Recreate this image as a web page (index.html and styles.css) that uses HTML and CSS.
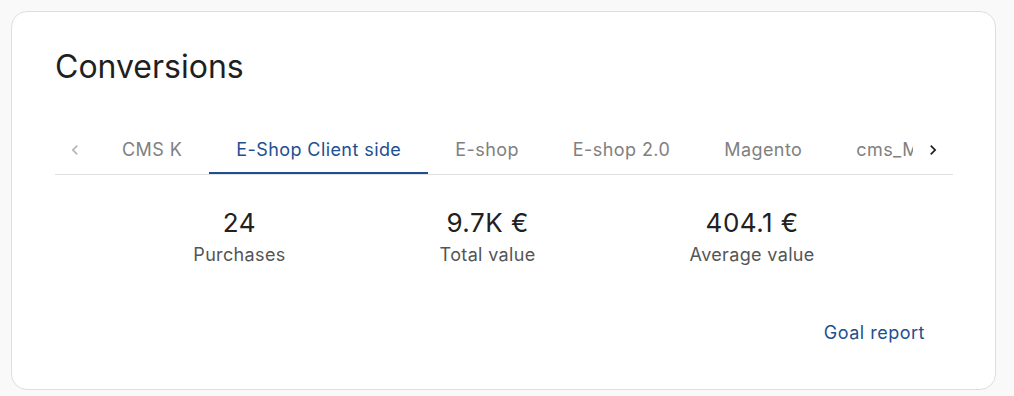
FILE: index.html
```html
<!DOCTYPE html>
<html lang="en">
<head>
    <meta charset="UTF-8">
    <meta name="viewport" content="width=device-width, initial-scale=1.0">
    <title>Conversions</title>
    <link rel="stylesheet" href="styles.css">
</head>
<body>
<div class="card">
    <h1>Conversions</h1>

    <div class="tabs">
        <button class="scroll-btn scroll-left" aria-label="Previous">
            <svg width="20" height="20" viewBox="0 0 24 24"><path d="M15.41 7.41 14 6l-6 6 6 6 1.41-1.41L10.83 12z"/></svg>
        </button>
        <div class="tab-list">
            <div class="tab">CMS K</div>
            <div class="tab active">E-Shop Client side</div>
            <div class="tab">E-shop</div>
            <div class="tab">E-shop 2.0</div>
            <div class="tab">Magento</div>
            <div class="tab">cms_Magento</div>
        </div>
        <button class="scroll-btn scroll-right" aria-label="Next">
            <svg width="20" height="20" viewBox="0 0 24 24"><path d="M10 6 8.59 7.41 13.17 12l-4.58 4.59L10 18l6-6z"/></svg>
        </button>
    </div>

    <div class="stats">
        <div class="stat">
            <div class="stat-value">24</div>
            <div class="stat-label">Purchases</div>
        </div>
        <div class="stat">
            <div class="stat-value">9.7K €</div>
            <div class="stat-label">Total value</div>
        </div>
        <div class="stat">
            <div class="stat-value">404.1 €</div>
            <div class="stat-label">Average value</div>
        </div>
    </div>

    <div class="actions">
        <a class="link-btn" href="#">Goal report</a>
    </div>
</div>
</body>
</html>
```

FILE: styles.css
```css
body {
    margin: 0;
    padding: 11px 18px 7px 11px;
    background-color: #f9f9f9;
    font-family: Inter, "Noto Sans", sans-serif;
}
.card {
    background-color: #ffffff;
    border: 1px solid #dedede;
    border-radius: 16px;
    padding: 35px 42px 0 43px;
    height: 342px;
}
h1 {
    margin: 0;
    font-size: 32px;
    line-height: 40px;
    font-weight: 400;
    color: #1f1f1f;
}
.tabs {
    display: flex;
    align-items: stretch;
    height: 48px;
    margin-top: 39px;
    border-bottom: 1px solid #e0e0e0;
}
.scroll-btn {
    flex: 0 0 40px;
    display: flex;
    align-items: center;
    justify-content: center;
    padding: 0;
    border: none;
    background: none;
    cursor: pointer;
}
.scroll-left svg {
    fill: #b5b5b5;
}
.scroll-right svg {
    fill: #1f1f1f;
}
.tab-list {
    flex: 1;
    display: flex;
    overflow: hidden;
}
.tab {
    flex: none;
    display: flex;
    align-items: center;
    padding: 0 27px;
    font-size: 18px;
    letter-spacing: 0.42px;
    color: #808080;
    white-space: nowrap;
    border-bottom: 2px solid transparent;
}
.tab.active {
    color: #1d4f91;
    border-bottom-color: #1d4f91;
}
.stats {
    display: flex;
    justify-content: center;
    gap: 154px;
    margin-top: 32px;
    text-align: center;
}
.stat-value {
    font-size: 26px;
    line-height: 32px;
    letter-spacing: 0.5px;
    color: #212121;
}
.stat-label {
    margin-top: 4px;
    font-size: 18px;
    line-height: 24px;
    letter-spacing: 0.35px;
    color: #555555;
}
.actions {
    display: flex;
    justify-content: flex-end;
    margin-top: 54px;
}
.link-btn {
    padding: 0 28px;
    font-size: 18px;
    line-height: 24px;
    letter-spacing: 0.5px;
    color: #1d4f91;
    text-decoration: none;
}
```
